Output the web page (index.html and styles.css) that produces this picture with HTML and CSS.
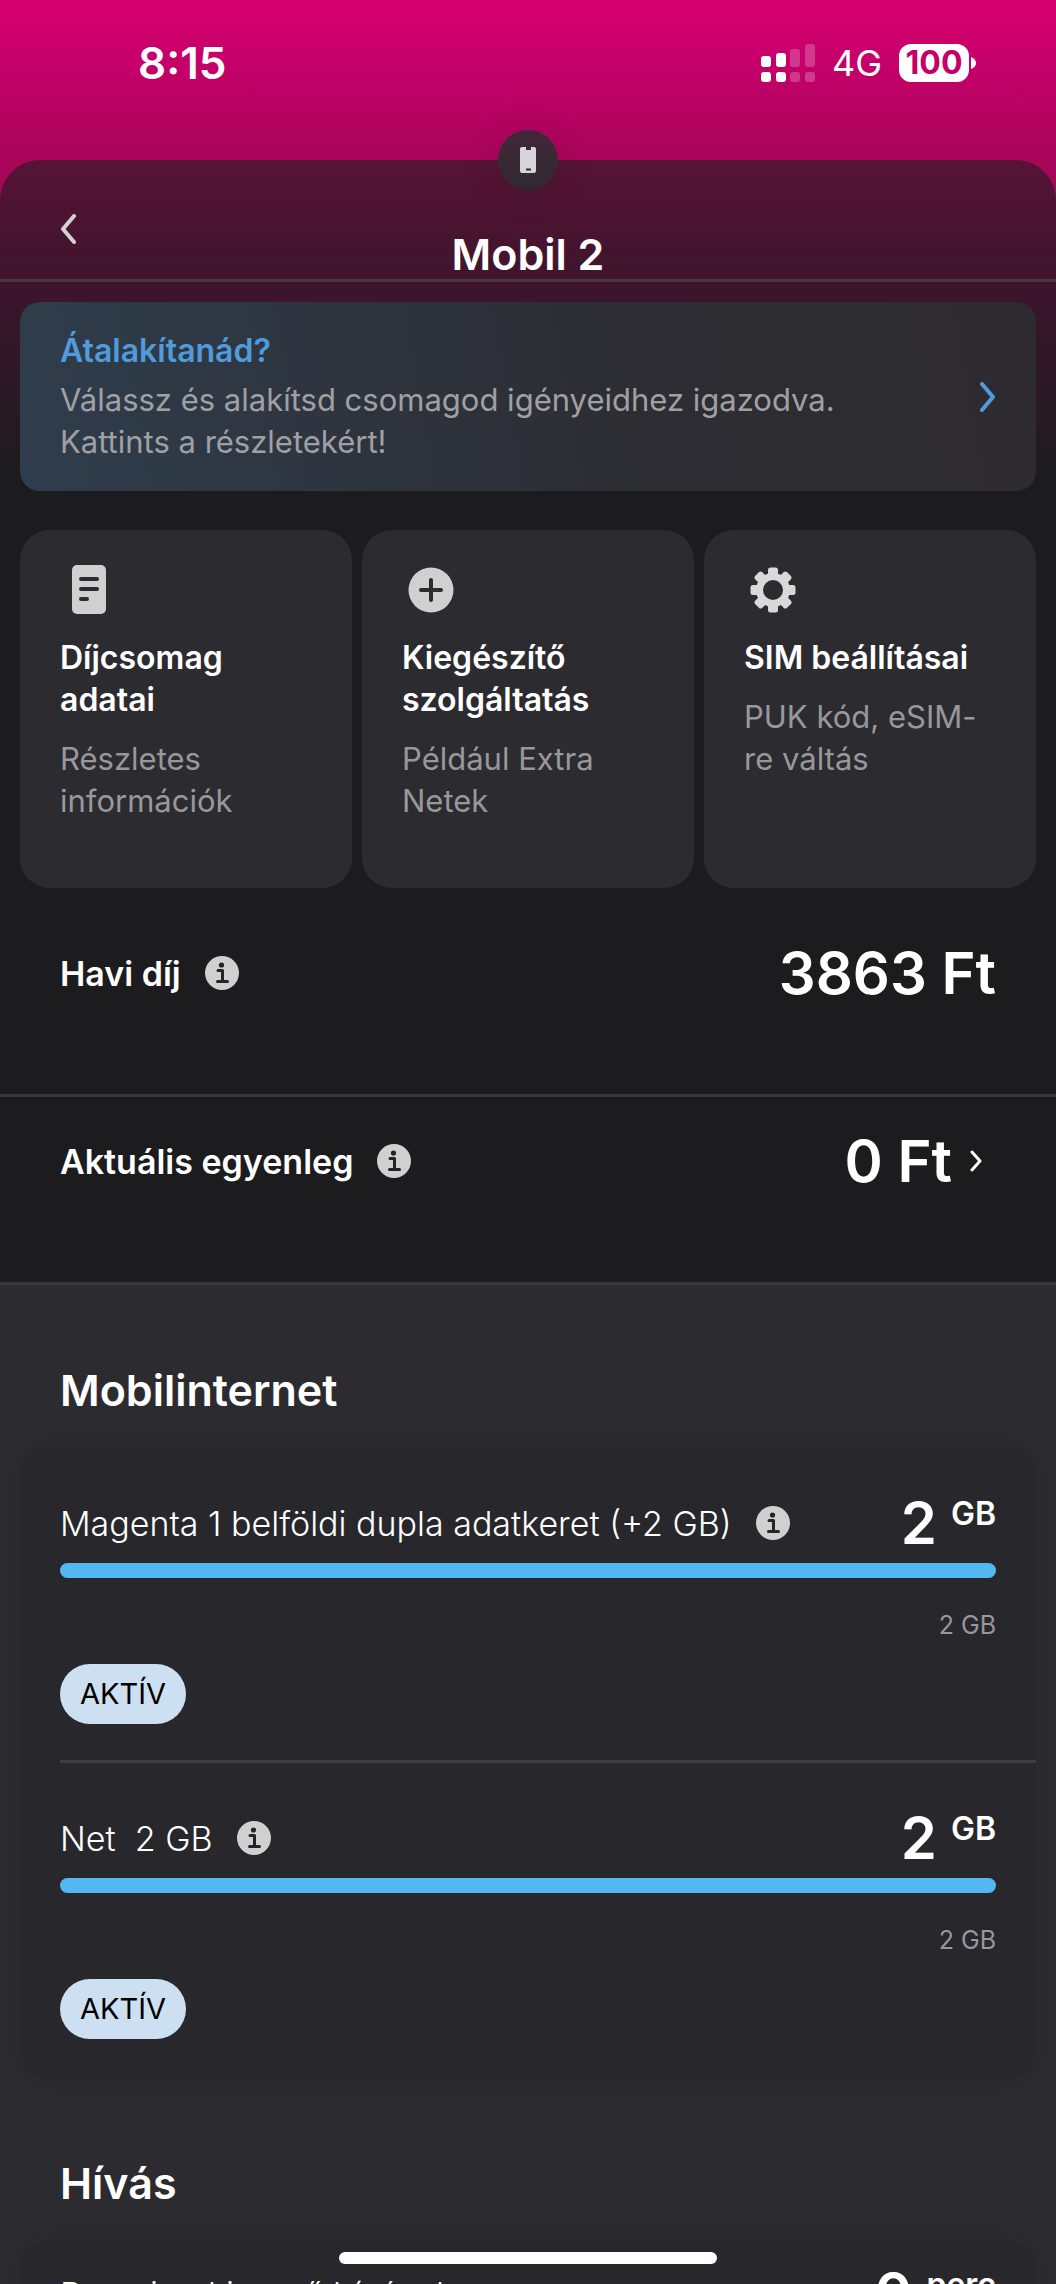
FILE: index.html
```html
<!doctype html>
<html lang="hu">
<head>
    <meta charset="UTF-8">
    <meta name="viewport" content="width=device-width, initial-scale=1.0">
    <title>Mobil 2</title>
    <link rel="stylesheet" href="styles.css">
</head>
<body>

<!-- shared icons -->
<svg class="defs" width="0" height="0" aria-hidden="true">
    <symbol id="info" viewBox="0 0 34 34">
        <circle cx="17" cy="17" r="17" fill="#d0d0d0"/>
        <circle cx="16.5" cy="9" r="2.6" fill="#242426"/>
        <path d="M13 14.5h4.5V25M12.5 25.5h10" fill="none" stroke="#242426" stroke-width="3" stroke-linecap="round" stroke-linejoin="round"/>
    </symbol>
</svg>

<div class="screen">
    <div class="status">
        <span class="time">8:15</span>
        <div class="status-right">
            <svg class="signal" viewBox="0 0 54 38" width="54" height="38" fill="#fff">
                <rect x="0" y="12" width="10" height="11" rx="3"/>
                <rect x="15" y="9" width="10" height="14" rx="3"/>
                <rect x="0" y="28" width="10" height="10" rx="3"/>
                <rect x="15" y="28" width="10" height="10" rx="3"/>
                <g opacity=".22">
                    <rect x="29" y="5" width="10" height="18" rx="3"/>
                    <rect x="44" y="0" width="10" height="23" rx="3"/>
                    <rect x="29" y="28" width="10" height="10" rx="3"/>
                    <rect x="44" y="28" width="10" height="10" rx="3"/>
                </g>
            </svg>
            <span class="net">4G</span>
            <div class="battery">
                <span class="level">100</span>
                <svg viewBox="0 0 5 12" width="5" height="12"><path d="M0 0q5 2 5 6t-5 6z" fill="#fff"/></svg>
            </div>
        </div>
    </div>

    <main class="sheet">
        <div class="badge">
            <svg viewBox="0 0 16 26" width="16" height="26">
                <path d="M2 0h4v3h5V0h3q2 0 2 2v22q0 2-2 2H2q-2 0-2-2V2q0-2 2-2z" fill="#d6d6d8"/>
                <rect x="6" y="21.500" width="5" height="2" fill="#33292f"/>
            </svg>
        </div>

        <header class="header">
            <button class="back" aria-label="Vissza">
                <svg viewBox="0 0 16 30" width="16" height="30"><path d="M14 2L3 15l11 13" fill="none" stroke="#d6d0d3" stroke-width="4" stroke-linecap="round" stroke-linejoin="round"/></svg>
            </button>
            <h1>Mobil 2</h1>
        </header>

        <a href="#" class="banner">
            <div>
                <h3>Átalakítanád?</h3>
                <p>Válassz és alakítsd csomagod igényeidhez igazodva. Kattints a részletekért!</p>
            </div>
            <svg viewBox="0 0 16 30" width="16" height="30"><path d="M2 2l11 13L2 28" fill="none" stroke="#4f9bdc" stroke-width="4" stroke-linecap="round" stroke-linejoin="round"/></svg>
        </a>

        <div class="tiles">
            <a href="#" class="tile">
                <svg viewBox="0 0 60 60" width="60" height="60">
                    <rect x="12" y="5" width="34" height="49" rx="5" fill="#d0d0d0"/>
                    <path d="M21 19h16M21 29h16M21 39h6" stroke="#2c2b30" stroke-width="4" stroke-linecap="round"/>
                </svg>
                <h3>Díjcsomag adatai</h3>
                <p>Részletes információk</p>
            </a>
            <a href="#" class="tile">
                <svg viewBox="0 0 60 60" width="60" height="60">
                    <circle cx="29" cy="30" r="22.500" fill="#d0d0d0"/>
                    <path d="M29 20v20M19 30h20" stroke="#2c2b30" stroke-width="4" stroke-linecap="round"/>
                </svg>
                <h3>Kiegészítő szolgáltatás</h3>
                <p>Például Extra Netek</p>
            </a>
            <a href="#" class="tile">
                <svg viewBox="0 0 60 60" width="60" height="60">
                    <g fill="#d9d9d9">
                        <rect x="24" y="7.500" width="10" height="45" rx="2.500"/>
                        <rect x="24" y="7.500" width="10" height="45" rx="2.500" transform="rotate(45 29 30)"/>
                        <rect x="24" y="7.500" width="10" height="45" rx="2.500" transform="rotate(90 29 30)"/>
                        <rect x="24" y="7.500" width="10" height="45" rx="2.500" transform="rotate(135 29 30)"/>
                        <circle cx="29" cy="30" r="17"/>
                    </g>
                    <circle cx="29" cy="30" r="10" fill="#2c2b30"/>
                </svg>
                <h3>SIM beállításai</h3>
                <p>PUK kód, eSIM-re váltás</p>
            </a>
        </div>

        <div class="fee">
            <span class="name">Havi díj</span>
            <button class="info" aria-label="Információ"><svg width="34" height="34"><use href="#info"/></svg></button>
            <strong>3863 Ft</strong>
        </div>
        <div class="fee">
            <span class="name">Aktuális egyenleg</span>
            <button class="info" aria-label="Információ"><svg width="34" height="34"><use href="#info"/></svg></button>
            <strong>0 Ft</strong>
            <a href="#" class="more" aria-label="Egyenleg részletei">
                <svg viewBox="0 0 12 22" width="12" height="22"><path d="M2 2l8 9-8 9" fill="none" stroke="#fff" stroke-width="3" stroke-linecap="round" stroke-linejoin="round"/></svg>
            </a>
        </div>

        <section class="usage">
            <h2>Mobilinternet</h2>
            <div class="card">
                <div class="item">
                    <div class="row">
                        <span class="name">Magenta 1 belföldi dupla adatkeret (+2 GB)</span>
                        <button class="info" aria-label="Információ"><svg width="34" height="34"><use href="#info"/></svg></button>
                        <strong>2<sup>GB</sup></strong>
                    </div>
                    <div class="bar"><div class="fill" style="width: 100%"></div></div>
                    <p class="total">2 GB</p>
                    <span class="pill">AKTÍV</span>
                </div>
                <div class="item">
                    <div class="row">
                        <span class="name">Net&nbsp; 2 GB</span>
                        <button class="info" aria-label="Információ"><svg width="34" height="34"><use href="#info"/></svg></button>
                        <strong>2<sup>GB</sup></strong>
                    </div>
                    <div class="bar"><div class="fill" style="width: 100%"></div></div>
                    <p class="total">2 GB</p>
                    <span class="pill">AKTÍV</span>
                </div>
            </div>

            <h2>Hívás</h2>
            <div class="card calls">
                <div class="item">
                    <div class="row">
                        <span class="name">Roaming kimenő hívások</span>
                        <strong>0<sup>perc</sup></strong>
                    </div>
                </div>
            </div>
        </section>
    </main>

    <div class="home"></div>
</div>

</body>
</html>
```
FILE: styles.css
```css
*{
    box-sizing: border-box;
}
body{
    margin: 0;
    background-color: #1c1c1e;
    color: #fff;
    font-family: Inter, "Liberation Sans", sans-serif;
}
h1,h2,h3,p{
    margin: 0;
    font-weight: 600;
}
a{
    color: inherit;
    text-decoration: none;
}
button{
    padding: 0;
    border: 0;
    background: none;
    color: inherit;
    cursor: pointer;
}
svg{
    display: block;
    flex: none;
}
.defs{
    position: absolute;
}
.screen{
    position: relative;
    height: 100vh;
    overflow: hidden;
    background: linear-gradient(#d6006e 0, #c5006a 64px, #a9065a 160px, #9c0755 210px, #1c1c1e 500px);
}

/* status bar */
.status{
    display: flex;
    justify-content: space-between;
    align-items: center;
    height: 160px;
    padding: 0 80px 35px 138px;
}
.time{
    font-size: 44px;
    font-weight: 600;
}
.status-right{
    display: flex;
    align-items: center;
    gap: 17px;
}
.net{
    font-size: 36px;
}
.battery{
    display: flex;
    align-items: center;
    gap: 2px;
}
.level{
    width: 70px;
    height: 38px;
    border-radius: 12px;
    background-color: #fff;
    color: #c5006a;
    font-size: 32px;
    font-weight: 700;
    line-height: 38px;
    text-align: center;
}

/* sheet */
.sheet{
    position: relative;
    border-radius: 40px 40px 0 0;
    background: linear-gradient(#571335 0, #3c152c 130px, #1c1c1e 320px);
}
.badge{
    position: absolute;
    top: -30px;
    left: 50%;
    display: flex;
    align-items: center;
    justify-content: center;
    width: 60px;
    height: 60px;
    margin-left: -30px;
    border-radius: 50%;
    background: linear-gradient(#42273a, #30292f);
    box-shadow: 0 4px 40px rgba(0,0,0,.12);
}
.header{
    display: grid;
    grid-template-columns: 1fr auto 1fr;
    height: 122px;
    padding: 54px 60px 0;
    border-bottom: 3px solid #4a3540;
}
.back{
    width: 16px;
    height: 30px;
}
h1{
    padding-top: 13px;
    font-size: 43px;
    line-height: 54px;
}
.banner{
    display: flex;
    align-items: center;
    justify-content: space-between;
    gap: 80px;
    margin: 20px 20px 39px;
    padding: 28px 40px;
    border-radius: 20px;
    background: linear-gradient(80deg, #2f3d4c, #2d2d33 60%, #2d2b2f);
    font-size: 31px;
    line-height: 42px;
}
.banner h3{
    margin-bottom: 7px;
    color: #4f9bdc;
    font-size: 32px;
}
.banner p,.tile p{
    color: #a0a0a4;
    font-weight: 400;
}

.tiles{
    display: grid;
    grid-template-columns: repeat(3, 1fr);
    gap: 10px;
    margin: 0 20px 21px;
}
.tile{
    min-height: 358px;
    padding: 30px 36px 40px 40px;
    border-radius: 30px;
    background-color: #2c2b30;
    font-size: 31px;
    line-height: 42px;
}
.tile h3{
    margin: 17px 0 17px;
    font-size: 32px;
}
.tile p{
    color: #98989c;
}

/* monthly fee and balance */
.fee{
    display: flex;
    align-items: center;
    padding: 24px 60px 81px;
    border-bottom: 3px solid #38383a;
}
.fee .name{
    font-size: 34px;
    font-weight: 600;
}
.info{
    margin-left: 24px;
}
strong{
    margin-left: auto;
    font-size: 58px;
    font-weight: 600;
    line-height: 80px;
}
.more{
    margin: 0 14px 0 18px;
}

.usage{
    padding: 1px 20px 0;
    background-color: #2c2b30;
}
h2{
    padding: 78px 40px 30px;
    font-size: 43px;
    line-height: 53px;
}
.card{
    min-height: 632px;
    border-radius: 30px;
    background-color: #28272b;
    box-shadow: 0 0 50px rgba(0,0,0,.08);
}
.item{
    margin-left: 40px;
    padding: 46px 40px 36px 0;
}
.item + .item{
    padding-top: 45px;
    border-top: 3px solid #3e3d42;
}
.calls .item{
    padding-top: 24px;
}
.row{
    display: flex;
    align-items: center;
    height: 60px;
    margin-bottom: 10px;
}
.row .name{
    font-size: 34px;
    font-weight: 300;
}
.row strong{
    display: flex;
    gap: 14px;
    line-height: 60px;
}
sup{
    font-size: 32px;
    line-height: 42px;
}
.bar{
    height: 15px;
    border-radius: 8px;
    background-color: #3e3d42;
}
.fill{
    height: 15px;
    border-radius: 8px;
    background-color: #52b8f2;
}
.total{
    margin: 30px 0 22px;
    color: #98989c;
    font-size: 25px;
    font-weight: 400;
    line-height: 34px;
    text-align: right;
}
.pill{
    display: inline-block;
    padding: 0 20px;
    border-radius: 30px;
    background-color: #cce0f2;
    color: #000;
    font-size: 29px;
    line-height: 60px;
    vertical-align: top;
}

.home{
    position: absolute;
    bottom: 20px;
    left: 50%;
    width: 378px;
    height: 12px;
    margin-left: -189px;
    border-radius: 6px;
    background-color: #fff;
}
```
